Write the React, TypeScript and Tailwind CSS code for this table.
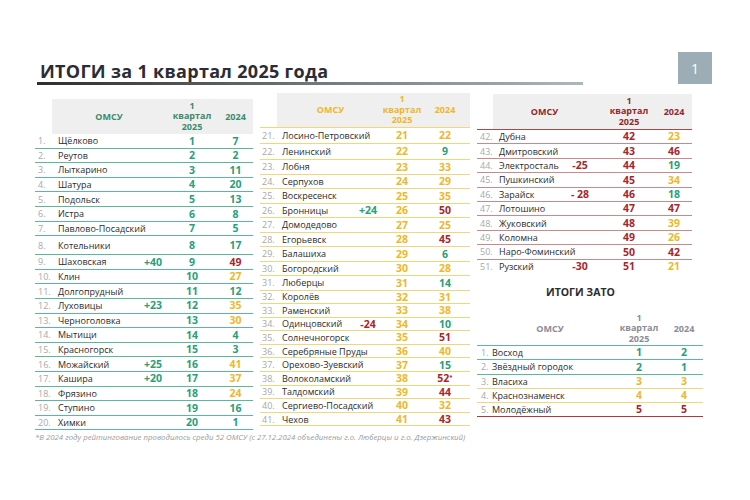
import React from 'react';

type R = [number, string, string, number, string];
type Cols = { idx: string; name: string; delta: string; q: string; y: string };

const GREEN = 'text-[#27a07a]';
const YELLOW = 'text-[#f0b728]';
const RED = 'text-[#a8262b]';

function tone(v: number) {
  if (v <= 20) return GREEN;
  if (v <= 41) return YELLOW;
  return RED;
}

const t1: R[] = [
  [1, 'Щёлково', '', 1, '7'],
  [2, 'Реутов', '', 2, '2'],
  [3, 'Лыткарино', '', 3, '11'],
  [4, 'Шатура', '', 4, '20'],
  [5, 'Подольск', '', 5, '13'],
  [6, 'Истра', '', 6, '8'],
  [7, 'Павлово-Посадский', '', 7, '5'],
  [8, 'Котельники', '', 8, '17'],
  [9, 'Шаховская', '+40', 9, '49'],
  [10, 'Клин', '', 10, '27'],
  [11, 'Долгопрудный', '', 11, '12'],
  [12, 'Луховицы', '+23', 12, '35'],
  [13, 'Черноголовка', '', 13, '30'],
  [14, 'Мытищи', '', 14, '4'],
  [15, 'Красногорск', '', 15, '3'],
  [16, 'Можайский', '+25', 16, '41'],
  [17, 'Кашира', '+20', 17, '37'],
  [18, 'Фрязино', '', 18, '24'],
  [19, 'Ступино', '', 19, '16'],
  [20, 'Химки', '', 20, '1'],
];

const t2: R[] = [
  [21, 'Лосино-Петровский', '', 21, '22'],
  [22, 'Ленинский', '', 22, '9'],
  [23, 'Лобня', '', 23, '33'],
  [24, 'Серпухов', '', 24, '29'],
  [25, 'Воскресенск', '', 25, '35'],
  [26, 'Бронницы', '+24', 26, '50'],
  [27, 'Домодедово', '', 27, '25'],
  [28, 'Егорьевск', '', 28, '45'],
  [29, 'Балашиха', '', 29, '6'],
  [30, 'Богородский', '', 30, '28'],
  [31, 'Люберцы', '', 31, '14'],
  [32, 'Королёв', '', 32, '31'],
  [33, 'Раменский', '', 33, '38'],
  [34, 'Одинцовский', '-24', 34, '10'],
  [35, 'Солнечногорск', '', 35, '51'],
  [36, 'Серебряные Пруды', '', 36, '40'],
  [37, 'Орехово-Зуевский', '', 37, '15'],
  [38, 'Волоколамский', '', 38, '52*'],
  [39, 'Талдомский', '', 39, '44'],
  [40, 'Сергиево-Посадский', '', 40, '32'],
  [41, 'Чехов', '', 41, '43'],
];

const t3: R[] = [
  [42, 'Дубна', '', 42, '23'],
  [43, 'Дмитровский', '', 43, '46'],
  [44, 'Электросталь', '-25', 44, '19'],
  [45, 'Пушкинский', '', 45, '34'],
  [46, 'Зарайск', '- 28', 46, '18'],
  [47, 'Лотошино', '', 47, '47'],
  [48, 'Жуковский', '', 48, '39'],
  [49, 'Коломна', '', 49, '26'],
  [50, 'Наро-Фоминский', '', 50, '42'],
  [51, 'Рузский', '-30', 51, '21'],
];

const zato = [
  { n: 1, name: 'Восход', q: '1', y: '2', c: GREEN, line: 'border-[#5bb89c]' },
  { n: 2, name: 'Звёздный городок', q: '2', y: '1', c: GREEN, line: 'border-[#5bb89c]' },
  { n: 3, name: 'Власиха', q: '3', y: '3', c: YELLOW, line: 'border-[#f3d67c]' },
  { n: 4, name: 'Краснознаменск', q: '4', y: '4', c: YELLOW, line: 'border-[#f3d67c]' },
  { n: 5, name: 'Молодёжный', q: '5', y: '5', c: RED, line: 'border-[#b0373c]' },
];

const c1: Cols = { idx: 'w-[17px] pl-[3px]', name: 'w-[88px] pl-[6px]', delta: 'w-[26px]', q: 'w-[52px]', y: 'w-[35px]' };
const c2: Cols = { idx: 'w-[17px] pl-[2px]', name: 'w-[75px] pl-[5px]', delta: 'w-[32px]', q: 'w-[36px]', y: 'w-[50px]' };
const c3: Cols = { idx: 'w-[16px] pl-[3px]', name: 'w-[71px] pl-[6px]', delta: 'w-[32px]', q: 'w-[66px]', y: 'w-[24px]' };

function Row({ r, c, h, line }: { r: R; c: Cols; h: string; line: string }) {
  const [n, name, d, q, y] = r;
  const star = y.endsWith('*');
  return (
    <div className={`flex items-center ${h} ${line} text-[9px] leading-none`}>
      <span className={`${c.idx} shrink-0 text-[#a8a8a8]`}>{n}.</span>
      <span className={`${c.name} shrink-0 whitespace-nowrap text-[#2b2b2b]`}>{name}</span>
      <span className={`${c.delta} shrink-0 text-center text-[10.5px] font-bold ${d.startsWith('+') ? GREEN : RED}`}>
        {d}
      </span>
      <span className={`${c.q} shrink-0 text-center text-[10.5px] font-bold ${tone(q)}`}>{q}</span>
      <span className={`${c.y} shrink-0 text-center text-[10.5px] font-bold ${tone(parseInt(y))}`}>
        {star ? y.slice(0, -1) : y}
        {star && <sup className="text-[6px]">*</sup>}
      </span>
    </div>
  );
}

function HeadCells({ w1, w2, w3 }: { w1: string; w2: string; w3: string }) {
  return (
    <>
      <div className={`${w1} flex h-[31px] items-center justify-center`}>ОМСУ</div>
      <div className={`${w2} flex h-[31px] flex-col items-center justify-center`}>
        <span className="leading-[10.5px]">1</span>
        <span className="leading-[10.5px]">квартал</span>
        <span className="leading-[10.5px]">2025</span>
      </div>
      <div className={`${w3} flex h-[31px] items-center justify-center`}>2024</div>
    </>
  );
}

export default function App() {
  return (
    <div className="h-[500px] w-[750px] overflow-hidden bg-white font-['Open_Sans',sans-serif]">
      <div className="flex pl-[37px] pr-[38px] pt-[52px]">
        <div className="flex h-[33px] w-[546px] flex-col justify-end">
          <h1 className="pl-[3px] text-[18px] font-bold leading-[22px] tracking-[0.3px] text-[#2c2c36]">
            ИТОГИ за 1 квартал 2025 года
          </h1>
          <div className="h-[3px] bg-linear-to-r from-[#2e2e2e] via-[#6f7779] to-[#adb8bc]" />
        </div>
        <div className="ml-auto flex h-[32px] w-[34px] items-center justify-center bg-[#9cadb5] text-[14px] text-white">
          1
        </div>
      </div>

      <div className="flex">
        <div className="ml-[35px] mt-[14px] w-[218px] shrink-0">
          <div className="flex h-[35px]">
            <div className="w-[17px]" />
            <div className="flex flex-1 items-center bg-[#efefef] text-[9px] font-bold text-[#3d8b6b]">
              <HeadCells w1="w-[114px]" w2="w-[52px]" w3="w-[35px]" />
            </div>
          </div>
          {t1.map((r) => (
            <Row
              key={r[0]}
              r={r}
              c={c1}
              h={r[0] === 8 ? 'h-[19px]' : 'h-[14.6px]'}
              line="border-b border-[#5bb89c]"
            />
          ))}
        </div>

        <div className="ml-[7px] mt-[8px] w-[210px] shrink-0">
          <div className="flex h-[35px]">
            <div className="w-[17px] border-b border-[#f3d67c]" />
            <div className="flex flex-1 items-center border-b border-[#f3d67c] bg-[#efefef] text-[9px] font-bold text-[#f0b728]">
              <HeadCells w1="w-[107px]" w2="w-[36px]" w3="w-[50px]" />
            </div>
          </div>
          {t2.map((r, i) => (
            <Row
              key={r[0]}
              r={r}
              c={c2}
              h={i < 2 ? 'h-[16px]' : i < 11 ? 'h-[14.5px]' : 'h-[13.6px]'}
              line="border-b border-[#f3d67c]"
            />
          ))}
        </div>

        <div className="ml-[7px] mt-[9px] w-[226px] shrink-0">
          <div className="w-[215px]">
            <div className="flex h-[36px]">
              <div className="w-[16px] border-b border-[#a9494e]" />
              <div className="flex flex-1 items-center border-b border-[#a9494e] bg-[#efefef] text-[9px] font-bold text-[#8e2a2e]">
                <HeadCells w1="w-[103px]" w2="w-[66px]" w3="w-[24px]" />
              </div>
            </div>
            {t3.map((r) => (
              <Row
                key={r[0]}
                r={r}
                c={c3}
                h="h-[14.4px]"
                line={r[0] === 51 ? '' : 'border-b border-[#c98a8d]'}
              />
            ))}
          </div>

          <div className="mt-[11px] pl-[69px] text-[10.5px] font-bold leading-[14px] text-[#2c2c2c]">ИТОГИ ЗАТО</div>

          <div className="mt-[7px] w-[226px]">
            <div className="flex h-[40px] items-end border-b border-[#5bb89c] pb-[1px] text-[9px] font-bold text-[#8c8c96]">
              <div className="w-[13px]" />
              <HeadCells w1="w-[120px]" w2="w-[58px]" w3="w-[32px]" />
            </div>
            {zato.map((z) => (
              <div key={z.n} className={`flex h-[14.3px] items-center border-b ${z.line} text-[9px] leading-none`}>
                <span className="w-[13px] shrink-0 pl-[4px] text-[#a8a8a8]">{z.n}.</span>
                <span className="w-[120px] shrink-0 whitespace-nowrap pl-[2px] text-[#2b2b2b]">{z.name}</span>
                <span className={`w-[58px] shrink-0 text-center text-[10.5px] font-bold ${z.c}`}>{z.q}</span>
                <span className={`w-[32px] shrink-0 text-center text-[10.5px] font-bold ${z.c}`}>{z.y}</span>
              </div>
            ))}
          </div>
        </div>
      </div>

      <p className="mt-[2px] pl-[35px] text-[7.8px] italic leading-[10px] text-[#9b9b9b]">
        *В 2024 году рейтингование проводилось среди 52 ОМСУ (с 27.12.2024 объединены г.о. Люберцы и г.о. Дзержинский)
      </p>
    </div>
  );
}
